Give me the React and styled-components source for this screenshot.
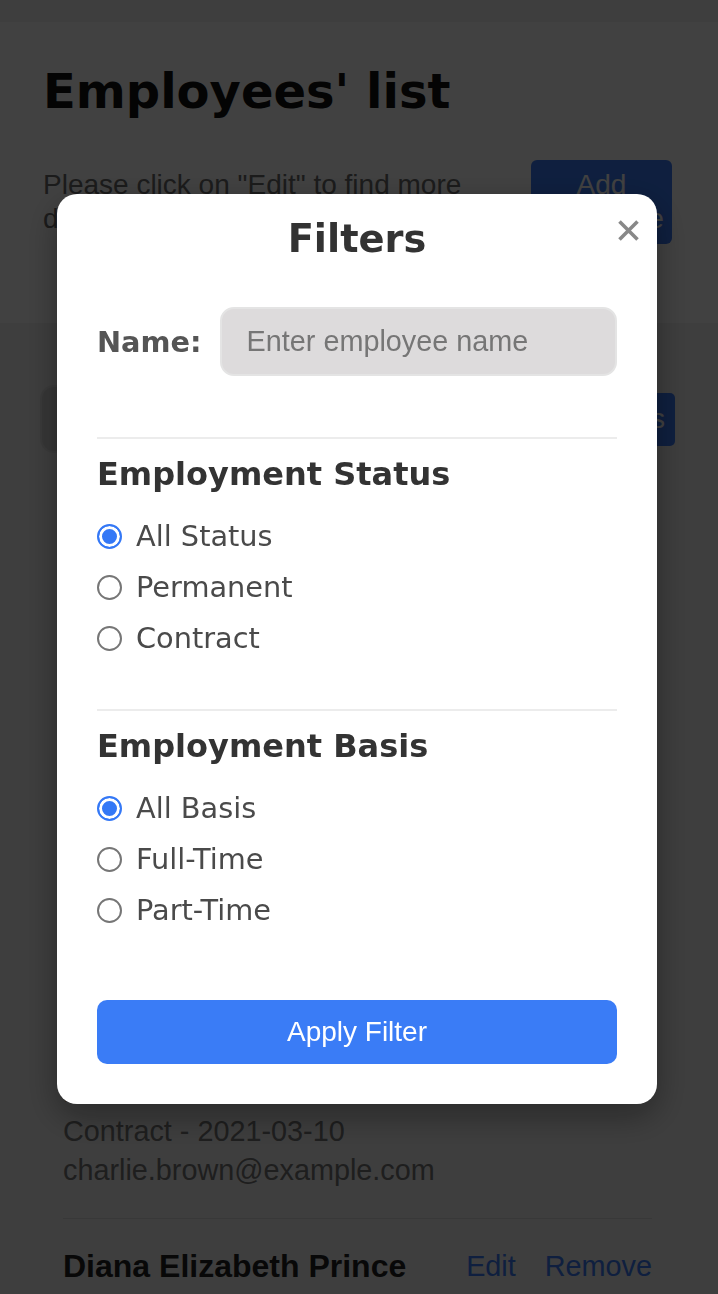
import React from "react";
import styled, { createGlobalStyle } from "styled-components";

const GlobalStyle = createGlobalStyle`
  html, body {
    margin: 0;
    padding: 0;
    overflow: hidden;
    background: #f2f2f2;
  }
  * { box-sizing: border-box; }
`;

const Page = styled.div`
  min-height: 100vh;
  background: #f2f2f2;
  font-family: "Liberation Sans", Arial, sans-serif;
`;

const Header = styled.header`
  margin-top: 22px;
  background: #ffffff;
  padding: 41px 46px 79px 43px;
`;

const PageTitle = styled.h1`
  margin: 0;
  font-family: "DejaVu Sans", Verdana, sans-serif;
  font-weight: 700;
  font-size: 48px;
  line-height: 56px;
  color: #111;
`;

const IntroRow = styled.div`
  margin-top: 41px;
  display: flex;
  align-items: center;
  justify-content: space-between;
  gap: 18px;
`;

const IntroText = styled.p`
  margin: 0;
  width: 470px;
  font-size: 28px;
  line-height: 34px;
  color: #6b6b6b;
`;

const PrimaryButton = styled.button`
  border: none;
  background: #3b7bf5;
  color: #fff;
  font-family: "Liberation Sans", Arial, sans-serif;
  font-size: 28px;
  line-height: 34px;
  border-radius: ${(p) => p.$radius || 6}px;
  padding: ${(p) => p.$pad || "8px"};
  width: ${(p) => (p.$width ? `${p.$width}px` : "auto")};
  height: ${(p) => (p.$height ? `${p.$height}px` : "auto")};
  flex-shrink: 0;
  cursor: pointer;
`;

const Main = styled.main`
  padding: 0 43px 0 40px;
`;

const SearchRow = styled.div`
  margin-top: 62px;
  display: flex;
  align-items: center;
  gap: 24px;
`;

const SearchInput = styled.input`
  flex: 1;
  height: 68px;
  border-radius: 14px;
  border: 2px solid #e3e3e3;
  background: #d6d6d6;
  padding: 0 25px;
  font-family: "Liberation Sans", Arial, sans-serif;
  font-size: 28px;
`;

const List = styled.ul`
  list-style: none;
  margin: 106px 0 0;
  padding: 0 23px;
`;

const Item = styled.li`
  padding: 28px 0;
  border-bottom: 1px solid #dddddd;
`;

const NameRow = styled.div`
  display: flex;
  align-items: center;
  justify-content: space-between;
  line-height: 38px;
`;

const EmpName = styled.span`
  font-weight: 700;
  font-size: 32px;
  color: #222;
`;

const Actions = styled.div`
  display: flex;
  gap: 29px;
`;

const LinkBtn = styled.a`
  font-size: 28.8px;
  color: #3b7bf5;
  text-decoration: none;
`;

const Details = styled.div`
  margin-top: 8px;
`;

const DetailLine = styled.div`
  font-size: 28.8px;
  line-height: 39px;
  color: #777;
`;

/* Modal */
const Overlay = styled.div`
  position: fixed;
  inset: 0;
  background: rgba(0, 0, 0, 0.745);
  display: flex;
  align-items: center;
  justify-content: center;
  padding: 4px 4px 0 0;
`;

const Modal = styled.div`
  position: relative;
  width: 600px;
  background: #ffffff;
  border-radius: 20px;
  padding: 22px 40px 40px;
  box-shadow: 0 12px 34px rgba(0, 0, 0, 0.35);
  font-family: "DejaVu Sans", Verdana, sans-serif;
`;

const ModalTitle = styled.h2`
  margin: 0;
  text-align: center;
  font-size: 38.4px;
  line-height: 45px;
  font-weight: 700;
  color: #333;
`;

const CloseButton = styled.button`
  position: absolute;
  top: 24px;
  right: 17px;
  width: 23px;
  height: 24px;
  padding: 0;
  border: none;
  background: transparent;
  display: flex;
  align-items: center;
  justify-content: center;
  cursor: pointer;
`;

const FieldRow = styled.div`
  margin-top: 46px;
  display: flex;
  align-items: center;
  gap: 18px;
`;

const FieldLabel = styled.label`
  font-size: 28.8px;
  font-weight: 700;
  color: #555;
`;

const TextInput = styled.input`
  flex: 1;
  min-width: 0;
  height: 69px;
  border-radius: 14px;
  border: 2px solid #e4e4e4;
  background: #dddbdc;
  padding: 0 25px;
  font-family: "Liberation Sans", Arial, sans-serif;
  font-size: 28.8px;
  color: #333;
  outline: none;
  &::placeholder {
    color: #767676;
  }
`;

const Section = styled.section`
  margin-top: ${(p) => p.$gap}px;
  border-top: 2px solid #ececec;
  padding-top: 17px;
`;

const SectionTitle = styled.h3`
  margin: 0 0 26px;
  font-size: 32px;
  line-height: 37px;
  font-weight: 700;
  color: #333;
`;

const Options = styled.div`
  display: flex;
  flex-direction: column;
  gap: 17px;
`;

const OptionLabel = styled.label`
  display: flex;
  align-items: center;
  gap: 14px;
  font-size: 28.8px;
  line-height: 34px;
  color: #4a4a4a;
  cursor: pointer;
`;

const Radio = styled.input.attrs({ type: "radio" })`
  appearance: none;
  -webkit-appearance: none;
  margin: 0;
  width: 25px;
  height: 25px;
  border-radius: 50%;
  border: 2px solid #767676;
  background: #fff;
  flex-shrink: 0;
  &:checked {
    border: 2.5px solid #3478f6;
    background: #3478f6;
    box-shadow: inset 0 0 0 3px #fff;
  }
`;

const ApplyButton = styled.button`
  margin-top: 73px;
  width: 100%;
  height: 64px;
  border: none;
  border-radius: 10px;
  background: #3a7cf6;
  color: #fff;
  font-family: "Liberation Sans", Arial, sans-serif;
  font-size: 28px;
  cursor: pointer;
`;

const employees = [
  { name: "Alice Johnson", role: "Software Engineer", basis: "Permanent - 2019-06-15", email: "alice.johnson@example.com" },
  { name: "Bob Smith", role: "Product Manager", basis: "Permanent - 2020-01-20", email: "bob.smith@example.com" },
  { name: "Charlie Brown", role: "Marketer", basis: "Contract - 2021-03-10", email: "charlie.brown@example.com" },
  { name: "Diana Elizabeth Prince", role: "Data Analyst", basis: "Permanent - 2018-11-05", email: "diana.prince@example.com" },
];

const statusOptions = ["All Status", "Permanent", "Contract"];
const basisOptions = ["All Basis", "Full-Time", "Part-Time"];

function RadioGroup({ name, options }) {
  return (
    <Options>
      {options.map((o, i) => (
        <OptionLabel key={o}>
          <Radio name={name} value={o} defaultChecked={i === 0} />
          {o}
        </OptionLabel>
      ))}
    </Options>
  );
}

export default function App() {
  return (
    <>
      <GlobalStyle />
      <Page>
        <Header>
          <PageTitle>Employees' list</PageTitle>
          <IntroRow>
            <IntroText>
              Please click on "Edit" to find more details about each employee.
            </IntroText>
            <PrimaryButton $width={141} $height={84}>Add Employee</PrimaryButton>
          </IntroRow>
        </Header>
        <Main>
          <SearchRow>
            <SearchInput placeholder="" />
            <PrimaryButton $height={53} $pad="0 10px" $radius={5}>Filters</PrimaryButton>
          </SearchRow>
          <List>
            {employees.map((e) => (
              <Item key={e.email}>
                <NameRow>
                  <EmpName>{e.name}</EmpName>
                  <Actions>
                    <LinkBtn href="#">Edit</LinkBtn>
                    <LinkBtn href="#">Remove</LinkBtn>
                  </Actions>
                </NameRow>
                <Details>
                  <DetailLine>{e.role}</DetailLine>
                  <DetailLine>{e.basis}</DetailLine>
                  <DetailLine>{e.email}</DetailLine>
                </Details>
              </Item>
            ))}
          </List>
        </Main>
      </Page>

      <Overlay>
        <Modal>
          <ModalTitle>Filters</ModalTitle>
          <CloseButton aria-label="Close">
            <svg width="23" height="23" viewBox="0 0 23 23">
              <path d="M2.5 2.5 L20.5 20.5 M20.5 2.5 L2.5 20.5" stroke="#888" strokeWidth="3.6" strokeLinecap="butt" />
            </svg>
          </CloseButton>
          <FieldRow>
            <FieldLabel htmlFor="emp-name">Name:</FieldLabel>
            <TextInput id="emp-name" placeholder="Enter employee name" />
          </FieldRow>
          <Section $gap={61}>
            <SectionTitle>Employment Status</SectionTitle>
            <RadioGroup name="status" options={statusOptions} />
          </Section>
          <Section $gap={54}>
            <SectionTitle>Employment Basis</SectionTitle>
            <RadioGroup name="basis" options={basisOptions} />
          </Section>
          <ApplyButton>Apply Filter</ApplyButton>
        </Modal>
      </Overlay>
    </>
  );
}
